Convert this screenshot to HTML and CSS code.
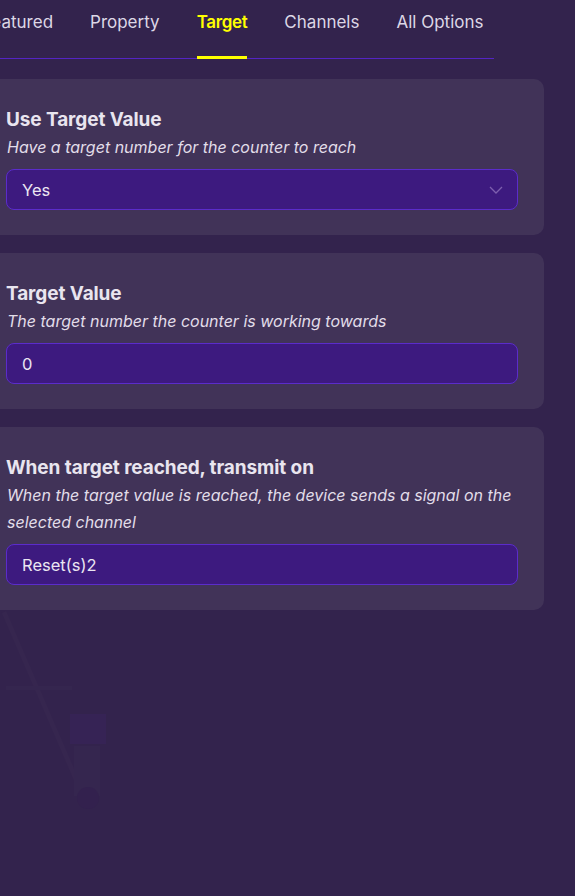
FILE: index.html
```html
<!DOCTYPE html>
<html>
<head>
<meta charset="utf-8">
<link rel="stylesheet" href="styles.css">
</head>
<body>
<svg class="backdrop" width="575" height="896" viewBox="0 0 575 896">
  <path d="M4 612 L85 800" stroke="#36264f" stroke-width="5" fill="none"/>
  <path d="M6 688 L72 688" stroke="#35264f" stroke-width="4" fill="none"/>
  <rect x="70" y="714" width="36" height="30" fill="#362355"/>
  <rect x="74" y="746" width="26" height="50" fill="#35264f"/>
  <circle cx="88" cy="798" r="11" fill="#33214e"/>
</svg>
<div class="page">
  <nav class="tabs">
    <div class="tab">Featured</div>
    <div class="tab">Property</div>
    <div class="tab active">Target</div>
    <div class="tab">Channels</div>
    <div class="tab">All Options</div>
  </nav>
  <div class="cards">
    <section class="card">
      <h2 class="title">Use Target Value</h2>
      <p class="desc">Have a target number for the counter to reach</p>
      <div class="field select">
        <span>Yes</span>
        <svg class="chev" width="14" height="8" viewBox="0 0 14 8"><path d="M1 1 L7 7 L13 1" fill="none" stroke="#7d5fae" stroke-width="1.3"/></svg>
      </div>
    </section>
    <section class="card">
      <h2 class="title">Target Value</h2>
      <p class="desc">The target number the counter is working towards</p>
      <div class="field"><span>0</span></div>
    </section>
    <section class="card">
      <h2 class="title">When target reached, transmit on</h2>
      <p class="desc">When the target value is reached, the device sends a signal on the selected channel</p>
      <div class="field"><span>Reset(s)2</span></div>
    </section>
  </div>
</div>
</body>
</html>
```
FILE: styles.css
```css
html, body {
  margin: 0;
  padding: 0;
  background: #33234d;
  width: 575px;
  height: 896px;
  overflow: hidden;
  font-family: Inter, "Noto Sans", sans-serif;
}
.backdrop {
  position: absolute;
  left: 0;
  top: 0;
  z-index: 0;
}
.page {
  position: relative;
  z-index: 1;
  width: 575px;
}
.tabs {
  display: flex;
  gap: 37px;
  width: 493px;
  margin-left: -20px;
  padding-left: 21px;
  height: 58px;
  border-bottom: 1px solid #5424c4;
}
.tab {
  font-size: 17px;
  color: #ddd7e6;
  line-height: 45px;
  height: 55px;
  box-sizing: border-box;
  white-space: nowrap;
}
.tab:first-child {
  margin-left: -19px;
}
.tab.active {
  color: #ffff00;
  font-weight: 600;
  letter-spacing: -0.35px;
  border-bottom: 3px solid #ffff00;
  height: 59px;
}
.cards {
  display: flex;
  flex-direction: column;
  gap: 18px;
  margin-top: 20px;
  margin-left: -20px;
  width: 564px;
}
.card {
  background: #413358;
  border-radius: 10px;
  padding: 30px 26px 25px 26px;
}
.title {
  margin: 0;
  font-size: 19px;
  line-height: 22px;
  font-weight: 700;
  color: #e9e5ef;
  letter-spacing: -0.1px;
}
.desc {
  margin: 3px 0 0 1px;
  font-size: 16px;
  line-height: 27px;
  font-style: italic;
  color: #e2dde9;
}
.field {
  margin-top: 8px;
  height: 41px;
  box-sizing: border-box;
  background: #3d1a7f;
  border: 1px solid #5b2ccb;
  border-radius: 8px;
  display: flex;
  align-items: center;
  justify-content: space-between;
  padding: 0 14px 0 15px;
  font-size: 16.5px;
  color: #ebe6f2;
}
.chev {
  display: block;
}
```
